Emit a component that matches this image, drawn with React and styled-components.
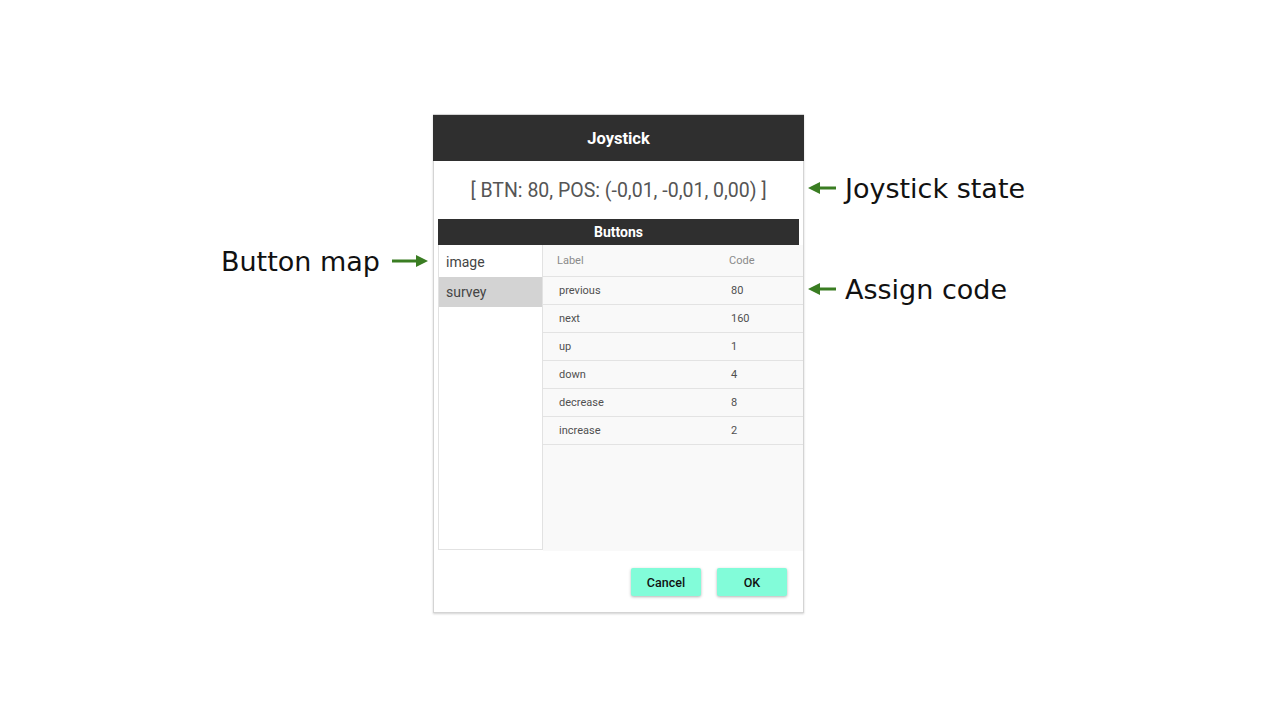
import React from 'react';
import styled, { createGlobalStyle } from 'styled-components';

const GlobalStyle = createGlobalStyle`
    html, body { margin: 0; padding: 0; background: #fff; }
    * { box-sizing: border-box; }
`;

const mappings = {
    image: [],
    survey: [
        { label: 'previous', code: 80 },
        { label: 'next', code: 160 },
        { label: 'up', code: 1 },
        { label: 'down', code: 4 },
        { label: 'decrease', code: 8 },
        { label: 'increase', code: 2 },
    ],
};

const Arrow = ({ dir = 'right', width = 36 }) => (
    <svg width={width} height="12" viewBox={`0 0 ${width} 12`}>
        {dir === 'right' ? (
            <>
                <rect x="0" y="4.5" width={width - 10} height="3" fill="#3a7d22" />
                <polygon points={`${width - 12},0 ${width},6 ${width - 12},12`} fill="#3a7d22" />
            </>
        ) : (
            <>
                <rect x="10" y="4.5" width={width - 10} height="3" fill="#3a7d22" />
                <polygon points="12,0 0,6 12,12" fill="#3a7d22" />
            </>
        )}
    </svg>
);

class App extends React.Component {
    constructor(props) {
        super(props);
        this.state = { selected: 'survey' };
    }

    render() {
        const rows = mappings[this.state.selected];
        return (
            <Stage>
                <GlobalStyle />
                <LeftNotes>
                    <Note>
                        <NoteText>Button map</NoteText>
                        <Arrow dir="right" width={36} />
                    </Note>
                </LeftNotes>
                <Dialog>
                    <Header>Joystick</Header>
                    <StateLine>[ BTN: 80, POS: (-0,01, -0,01, 0,00) ]</StateLine>
                    <Body>
                        <SectionBar>Buttons</SectionBar>
                        <Split>
                            <MapList>
                                {Object.keys(mappings).map(name => (
                                    <MapItem
                                        key={name}
                                        active={name === this.state.selected}
                                        onClick={() => this.setState({ selected: name })}
                                    >
                                        {name}
                                    </MapItem>
                                ))}
                            </MapList>
                            <CodeTable>
                                <CodeRow head>
                                    <Cell head>Label</Cell>
                                    <Cell head>Code</Cell>
                                </CodeRow>
                                {rows.map(r => (
                                    <CodeRow key={r.label}>
                                        <Cell>{r.label}</Cell>
                                        <Cell>{r.code}</Cell>
                                    </CodeRow>
                                ))}
                            </CodeTable>
                        </Split>
                    </Body>
                    <Footer>
                        <ActionButton>Cancel</ActionButton>
                        <ActionButton>OK</ActionButton>
                    </Footer>
                </Dialog>
                <RightNotes>
                    <Note gap="9px">
                        <Arrow dir="left" width={28} />
                        <NoteText>Joystick state</NoteText>
                    </Note>
                    <Note gap="9px" top="65px">
                        <Arrow dir="left" width={28} />
                        <NoteText>Assign code</NoteText>
                    </Note>
                </RightNotes>
            </Stage>
        );
    }
}

const Stage = styled.div`
    width: 1280px;
    height: 720px;
    display: flex;
    align-items: flex-start;
    padding-top: 114px;
    font-family: Roboto, "Liberation Sans", sans-serif;
`;

const LeftNotes = styled.div`
    width: 433px;
    display: flex;
    flex-direction: column;
    align-items: flex-end;
    padding-top: 129px;
    padding-right: 5px;
`;

const RightNotes = styled.div`
    display: flex;
    flex-direction: column;
    padding-left: 4px;
    padding-top: 56px;
`;

const Note = styled.div`
    display: flex;
    align-items: center;
    gap: ${p => p.gap || '12px'};
    height: 36px;
    margin-top: ${p => p.top || '0'};
`;

const NoteText = styled.span`
    font-family: "DejaVu Sans", "Noto Sans", sans-serif;
    font-size: 27px;
    color: #111;
    white-space: nowrap;
`;

const Dialog = styled.div`
    width: 371px;
    background: #fff;
    border: 1px solid #d4d4d4;
    box-shadow: 0 1px 2px rgba(0,0,0,0.18);
    display: flex;
    flex-direction: column;
`;

const Header = styled.div`
    height: 46px;
    background: #2f2f2f;
    color: #fff;
    font-weight: 700;
    font-size: 16.5px;
    display: flex;
    align-items: center;
    justify-content: center;
    margin: 0 -1px;
`;

const StateLine = styled.div`
    height: 58px;
    display: flex;
    align-items: center;
    justify-content: center;
    font-size: 19.5px;
    color: #555;
`;

const Body = styled.div`
    padding-left: 4px;
    display: flex;
    flex-direction: column;
`;

const SectionBar = styled.div`
    height: 26px;
    margin-right: 4px;
    background: #2f2f2f;
    color: #fff;
    font-weight: 700;
    font-size: 14px;
    display: flex;
    align-items: center;
    justify-content: center;
`;

const Split = styled.div`
    display: flex;
    height: 306px;
`;

const MapList = styled.div`
    width: 105px;
    height: 305px;
    padding-top: 2px;
    border: 1px solid #e2e2e2;
    border-top: none;
    background: #fff;
    display: flex;
    flex-direction: column;
`;

const MapItem = styled.div`
    height: 30px;
    padding-left: 7px;
    display: flex;
    align-items: center;
    font-size: 14px;
    color: #444;
    background: ${p => (p.active ? '#d3d3d3' : '#fff')};
    cursor: pointer;
`;

const CodeTable = styled.div`
    flex: 1;
    background: #f9f9f9;
    display: flex;
    flex-direction: column;
`;

const CodeRow = styled.div`
    display: grid;
    grid-template-columns: 172px 1fr;
    height: ${p => (p.head ? '32px' : '28px')};
    align-items: center;
    padding-left: ${p => (p.head ? '14px' : '16px')};
    border-bottom: 1px solid #e3e3e3;
`;

const Cell = styled.div`
    font-size: 11px;
    color: ${p => (p.head ? '#8a8a8a' : '#505050')};
    font-weight: 400;
`;

const Footer = styled.div`
    display: flex;
    justify-content: flex-end;
    gap: 16px;
    padding: 17px 16px 16px 0;
`;

const ActionButton = styled.button`
    width: 70px;
    height: 28px;
    border: none;
    border-radius: 2px;
    background: #82fcd9;
    box-shadow: 0 1px 3px rgba(0,0,0,0.3);
    font-family: Roboto, "Liberation Sans", sans-serif;
    font-size: 12.5px;
    font-weight: 500;
    color: #111;
    cursor: pointer;
`;

export default App;
